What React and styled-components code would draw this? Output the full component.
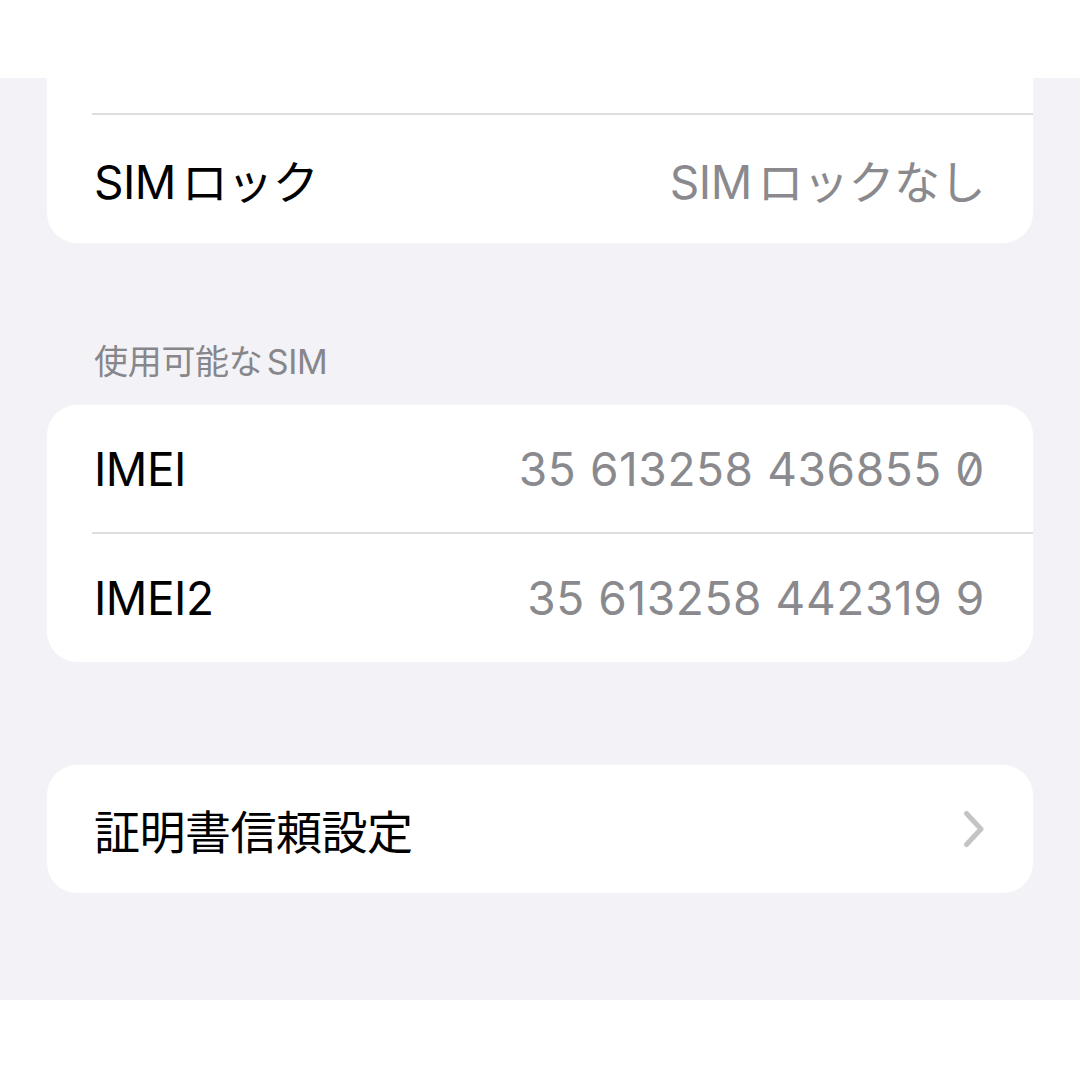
import React from "react";
import styled, { createGlobalStyle } from "styled-components";

const Global = createGlobalStyle`
  html, body { margin: 0; padding: 0; background: #ffffff; }
  body {
    font-family: "Inter", "Noto Sans CJK JP", sans-serif;
    -webkit-font-smoothing: antialiased;
    text-autospace: normal;
  }
`;

const Screen = styled.div`
  width: 1080px;
  height: 1080px;
  display: flex;
  flex-direction: column;
  overflow: hidden;
  background: #ffffff;
`;

const NavBar = styled.div`
  height: 78px;
  flex-shrink: 0;
  background: #ffffff;
`;

const BottomBar = styled.div`
  height: 80px;
  flex-shrink: 0;
  background: #ffffff;
`;

const Content = styled.div`
  flex: 1;
  min-height: 0;
  overflow: hidden;
  background: #f2f2f7;
  padding: 0 47px;
  display: flex;
  flex-direction: column;
`;

const Card = styled.div`
  background: #ffffff;
  border-radius: ${(p) => (p.$continued ? "0 0 30px 30px" : "30px")};
  margin-top: ${(p) => p.$gap || 0}px;
  overflow: hidden;
  flex-shrink: 0;
`;

const HiddenTop = styled.div`
  height: 35px;
`;

const Separator = styled.div`
  height: 2px;
  margin-left: 45px;
  background: #dedee2;
`;

const Row = styled.div`
  height: ${(p) => p.$h || 128}px;
  display: flex;
  align-items: center;
  justify-content: space-between;
  padding: 0 48px 0 47px;
`;

const Label = styled.span`
  font-size: 46px;
  color: #000000;
  letter-spacing: -0.5px;
  white-space: nowrap;
`;

const Value = styled.span`
  font-size: 46px;
  color: #8a8a8e;
  letter-spacing: ${(p) => (p.$numeric ? "0.6px" : "-0.5px")};
  font-feature-settings: "zero" 1;
  white-space: nowrap;
`;

const SectionHeader = styled.div`
  margin: 97px 0 21px 47px;
  height: 44px;
  line-height: 44px;
  font-size: 34px;
  color: #86868b;
  letter-spacing: -0.3px;
`;

const Chevron = () => (
  <svg width="22" height="38" viewBox="0 0 22 38" fill="none">
    <path
      d="M3.5 3.5 L18 19 L3.5 34.5"
      stroke="#c4c4c7"
      strokeWidth="5"
      strokeLinecap="round"
      strokeLinejoin="round"
    />
  </svg>
);

export default function App() {
  return (
    <>
      <Global />
      <Screen>
        <NavBar />
        <Content>
          <Card $continued>
            <HiddenTop />
            <Separator />
            <Row $h={128}>
              <Label>SIMロック</Label>
              <Value>SIMロックなし</Value>
            </Row>
          </Card>

          <SectionHeader>使用可能なSIM</SectionHeader>

          <Card>
            <Row $h={127}>
              <Label>IMEI</Label>
              <Value $numeric>35 613258 436855 0</Value>
            </Row>
            <Separator />
            <Row $h={128}>
              <Label>IMEI2</Label>
              <Value $numeric>35 613258 442319 9</Value>
            </Row>
          </Card>

          <Card $gap={103}>
            <Row $h={128}>
              <Label>証明書信頼設定</Label>
              <Chevron />
            </Row>
          </Card>
        </Content>
        <BottomBar />
      </Screen>
    </>
  );
}
